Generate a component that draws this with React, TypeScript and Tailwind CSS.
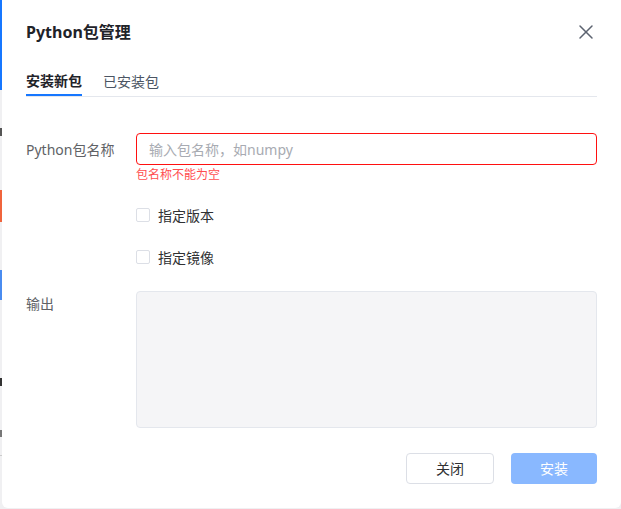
import { X } from "lucide-react"

const font = { fontFamily: '"Noto Sans", "Noto Sans CJK SC", sans-serif' }

function Checkbox({ label }: { label: string }) {
  return (
    <label className="flex h-[32px] items-center gap-2 text-[14px] text-[#303133]">
      <span className="h-[14px] w-[14px] rounded-[2px] border border-[#dcdfe6] bg-white" />
      {label}
    </label>
  )
}

export default function App() {
  return (
    <div className="flex h-[509px] w-[621px] bg-[#f0f0f2]" style={font}>
      {/* page behind the dialog */}
      <div className="flex w-[2px] flex-col">
        <div className="h-[90px] bg-[#1677ff]" />
        <div className="h-[38px]" />
        <div className="h-[8px] bg-[#555]" />
        <div className="h-[54px]" />
        <div className="h-[32px] bg-[#f0643c]" />
        <div className="h-[48px]" />
        <div className="h-[30px] bg-[#4a8cf0]" />
        <div className="h-[78px]" />
        <div className="h-[8px] bg-[#333]" />
        <div className="h-[44px]" />
        <div className="h-[7px] bg-[#777]" />
        <div className="h-[18px]" />
        <div className="h-px bg-[#ccc]" />
      </div>

      <div className="flex h-[508px] flex-1 flex-col rounded-b-[6px] bg-white px-6">
        <div className="flex h-[64px] items-center justify-between">
          <h2 className="text-[16px] font-bold text-[#1f2329]">Python包管理</h2>
          <X className="-mr-[1px] h-[24px] w-[24px] text-[#5c6370]" strokeWidth={1.5} />
        </div>

        <div className="flex gap-[21px] border-b border-[#e4e7ed]">
          <div className="flex h-[32px] items-center border-b-2 border-[#1677ff] pt-[2px] text-[14px] font-bold text-[#1f2329]">
            安装新包
          </div>
          <div className="flex h-[32px] items-center pt-[2px] text-[14px] text-[#4b5563]">
            已安装包
          </div>
        </div>

        <div className="mt-[36px] flex">
          <div className="flex h-[32px] w-[110px] items-center text-[14px] text-[#606266]">
            Python包名称
          </div>
          <div className="flex flex-1 flex-col">
            <div className="flex h-[32px] items-center rounded-[4px] border border-[#ff1010] px-3 text-[14px] text-[#a8abb2]">
              输入包名称，如numpy
            </div>
            <div className="h-[20px] text-[12px] leading-[20px] text-[#ff4d4f]">包名称不能为空</div>
            <div className="mt-[14px]">
              <Checkbox label="指定版本" />
            </div>
            <div className="mt-[10px]">
              <Checkbox label="指定镜像" />
            </div>
          </div>
        </div>

        <div className="mt-[18px] flex">
          <div className="w-[110px] text-[14px] leading-[26px] text-[#606266]">输出</div>
          <div className="h-[137px] flex-1 rounded-[4px] border border-[#e4e7ed] bg-[#f5f5f7]" />
        </div>

        <div className="mt-[25px] flex justify-end gap-[17px]">
          <button className="h-[31px] w-[88px] rounded-[4px] border border-[#dcdfe6] bg-white text-[14px] text-[#303133]">
            关闭
          </button>
          <button className="h-[31px] w-[86px] rounded-[4px] bg-[#89b8ff] text-[14px] text-white">
            安装
          </button>
        </div>
      </div>
    </div>
  )
}
